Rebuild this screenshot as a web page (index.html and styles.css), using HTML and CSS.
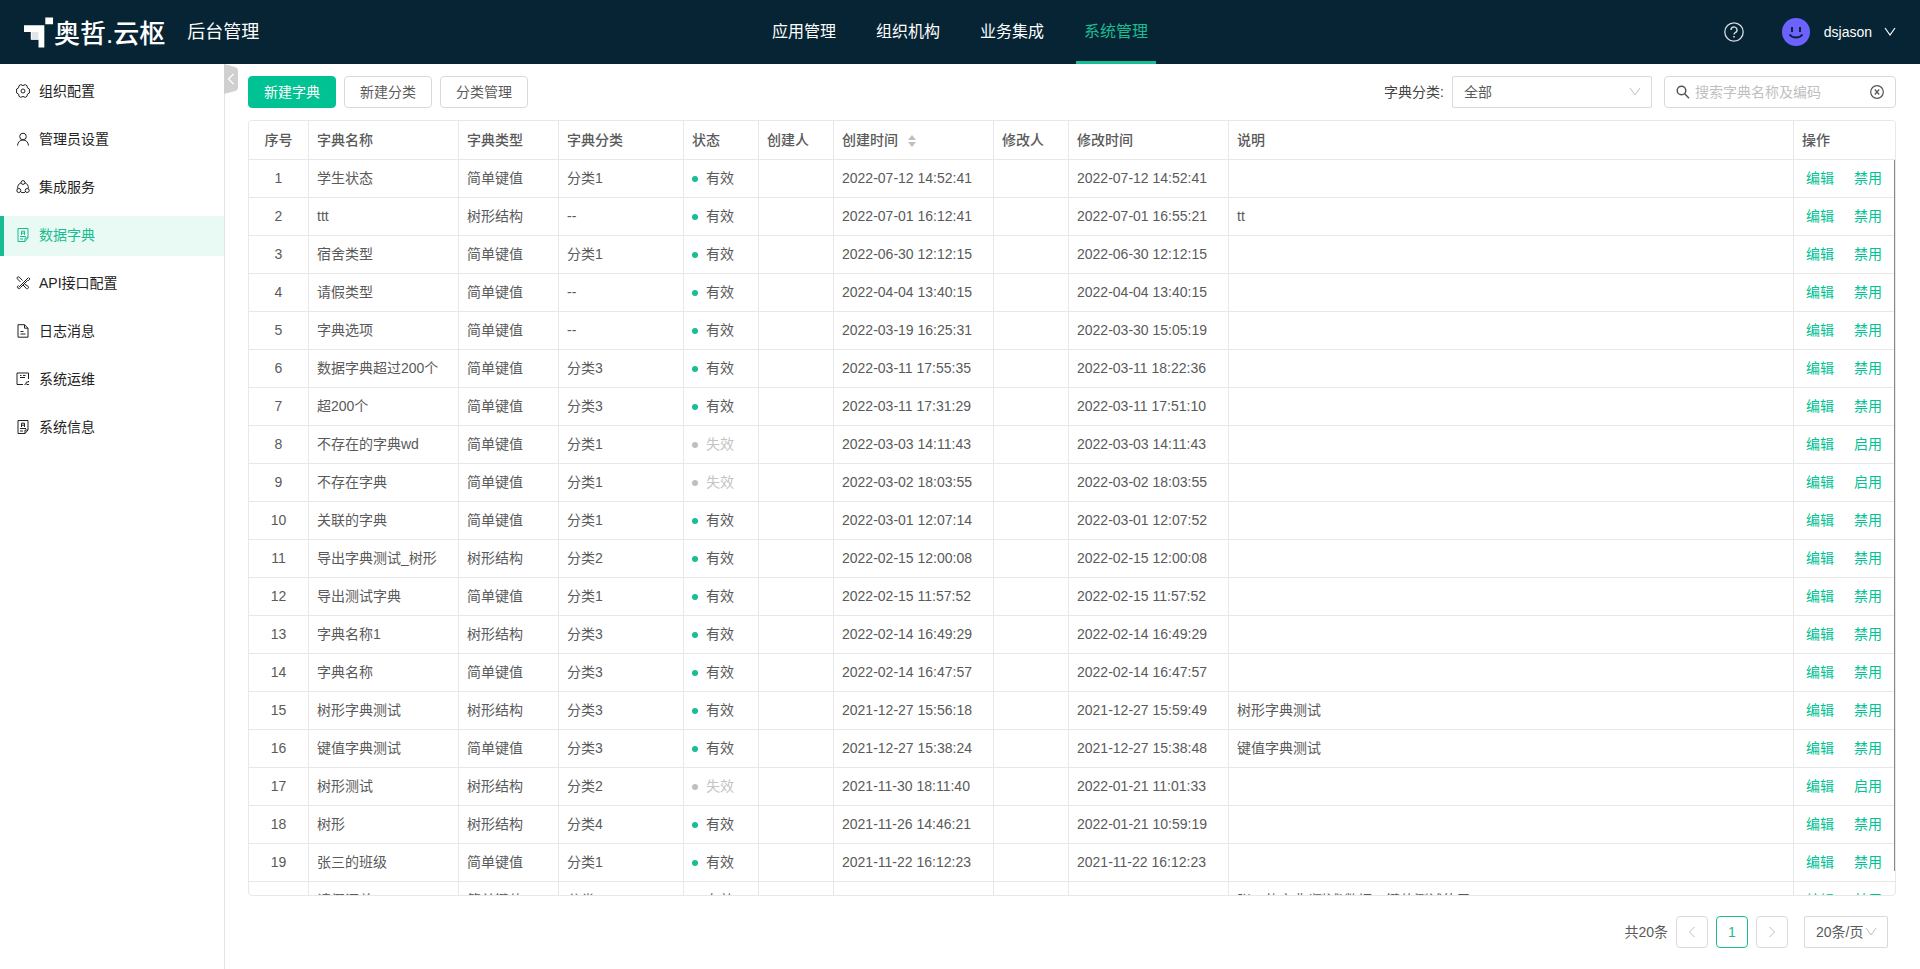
FILE: index.html
```html
<!DOCTYPE html>
<html lang="zh-CN">
<head>
	<title>后台管理</title>
	<meta charset="utf-8">
<link rel="stylesheet" href="styles.css">
</head>
<body>
<header class="header">
	<div class="brand">
		<a href="#" class="logo">
			<svg class="logo-mark" viewBox="0 0 31 31"><path fill="#fff" d="M22 0h8v7h-8zM0 8h21v23h-6v-8H7v-8H0z"/><path fill="#dfe5e8" d="M8 15h7v8H8z"/></svg>
			<span class="logo-text">奥哲.云枢</span>
		</a>
		<span class="title">后台管理</span>
	</div>
	<nav class="nav">
		<a href="#">应用管理</a>
		<a href="#">组织机构</a>
		<a href="#">业务集成</a>
		<a href="#" class="active">系统管理</a>
	</nav>
	<div class="user">
		<svg class="help" viewBox="0 0 20 20" fill="none" stroke="#d5dade"><circle cx="10" cy="10" r="9.2" stroke-width="1.3"/><path d="M7 8a3 3 0 1 1 4.3 2.6c-.9.4-1.3.9-1.3 1.9" stroke-width="1.4"/><path d="M10 14v1.6" stroke-width="1.6"/></svg>
		<svg class="avatar" viewBox="0 0 28 28"><circle cx="14" cy="14" r="14" fill="#6c63ff"/><path fill="#062434" d="M9 9h2v5H9zM17 9h2v5h-2z"/><path d="M7.500 16.500c3 4 10 4 13 0" fill="none" stroke="#062434" stroke-width="2"/></svg>
		<span class="username">dsjason</span>
		<svg class="arrow" viewBox="0 0 12 12" fill="none" stroke="#fff" stroke-width="1.2"><path d="M1 2l5 7 5-7"/></svg>
	</div>
</header>

<div class="container">
	<aside class="sidebar">
		<a href="#"><svg viewBox="0 0 14 14"><path d="M4.800.6Q7 2.600 9.200.6L11 1.700Q10.600 4.300 13.400 5v4Q10.600 9.700 11 12.300L9.200 13.400Q7 11.400 4.800 13.400L3 12.300Q3.400 9.700.6 9V5Q3.400 4.300 3 1.700z"/><circle cx="7" cy="7" r="2"/></svg>组织配置</a>
		<a href="#"><svg viewBox="0 0 14 14"><circle cx="7" cy="4.500" r="3.300"/><path d="M1.500 13.500C1.800 10 4 8 7 8s5.200 2 5.500 5.500"/></svg>管理员设置</a>
		<a href="#"><svg viewBox="0 0 14 14"><circle cx="7" cy="2.500" r="1.900"/><circle cx="2.800" cy="10.500" r="2"/><circle cx="11.200" cy="10.500" r="2"/><path d="M5 2.800C2.500 3.800 1.500 6 1.600 8.500M9 2.800c2.500 1 3.500 3.200 3.400 5.700M5 12.200c1.300.6 2.700.6 4 0"/></svg>集成服务</a>
		<a href="#" class="active"><svg viewBox="0 0 14 14"><path d="M2 .5h10v9.500l-3 3.500H2zM9 13.500V10h3M5.500 7V3.200h3V7M5.500 5.200h3M4 8.500h6M4 11h3"/></svg>数据字典</a>
		<a href="#"><svg viewBox="0 0 14 14"><path d="M12.500 1.500l-10 10M2.500 9.500a1.600 1.600 0 1 0 2 2l7-7c1.500.4 2.400-1 2-2.500M4.500 6L1.300 2.800a1.300 1.300 0 0 1 1.800-1.800L6.500 4.500M8.500 8l3.800 2.500a1.500 1.500 0 0 1-1.800 2.200L7 9"/></svg>API接口配置</a>
		<a href="#"><svg viewBox="0 0 14 14"><path d="M2 .7h6.500L12 4.200v9H2zM8.500.7v3.500H12M4.500 7.500h3M4.500 10h5"/></svg>日志消息</a>
		<a href="#"><svg viewBox="0 0 14 14"><path d="M7 12.500H1V1h11.500v6M4 3.500h1.500M7 3.500h2.500M4 5.500h5M8.500 12.500q2 0 2-2.500M10.500 10h2M12.500 9v1M10.500 12.500h2.500"/></svg>系统运维</a>
		<a href="#"><svg viewBox="0 0 14 14"><path d="M2 .5h10v9.500l-3 3.500H2zM9 13.500V10h3M5.500 7V3.200h3V7M5.500 5.200h3M4 8.500h6M4 11h3"/></svg>系统信息</a>
	</aside>

	<main class="main">
		<button class="collapse" aria-label="收起">
			<svg viewBox="0 0 14 30"><path fill="#d0d0d0" d="M0 0l11 3q3 1 3 4v16q0 3-3 4L0 30z"/><path d="M9.500 10l-5 5 5 5" fill="none" stroke="#fff" stroke-width="1.200"/></svg>
		</button>
		<div class="toolbar">
			<button class="btn primary">新建字典</button>
			<button class="btn">新建分类</button>
			<button class="btn">分类管理</button>
			<div class="filter">
				<label for="type">字典分类:</label>
				<div class="select">
					<select id="type"><option>全部</option></select>
					<svg class="arrow" viewBox="0 0 12 12"><path d="M1 2l5 7 5-7"/></svg>
				</div>
				<div class="search">
					<svg viewBox="0 0 14 14" fill="none" stroke="#555" stroke-width="1.500"><circle cx="5.500" cy="5.500" r="4.300"/><path d="M8.700 8.700l4.300 4.500"/></svg>
					<input type="text" placeholder="搜索字典名称及编码" aria-label="搜索字典名称及编码">
					<button class="clear" aria-label="清空"><svg viewBox="0 0 14 14" fill="none" stroke="#555" stroke-width="1.200"><circle cx="7" cy="7" r="6.300"/><path d="M4.800 4.500l4.400 5M9.200 4.500l-4.400 5"/></svg></button>
				</div>
			</div>
		</div>

		<div class="table-box">
			<div class="table-scroll">
				<table>
					<colgroup>
						<col class="w60"><col class="w150"><col class="w100"><col class="w125"><col class="w75"><col class="w75"><col class="w160"><col class="w75"><col class="w160"><col><col class="w101">
					</colgroup>
					<thead>
						<tr>
							<th>序号</th><th>字典名称</th><th>字典类型</th><th>字典分类</th><th>状态</th><th>创建人</th>
							<th>创建时间<svg class="sort" viewBox="0 0 8 12"><path d="M4 0l4 5H0zM4 12l4-5H0z"/></svg></th>
							<th>修改人</th><th>修改时间</th><th>说明</th><th>操作</th>
						</tr>
					</thead>
					<tbody id="rows"></tbody>
				</table>
			</div>
			<div class="thumb"></div>
		</div>

		<div class="pager">
			<span class="total">共20条</span>
			<button class="page" aria-label="上一页"><svg viewBox="0 0 12 12"><path d="M8.500 1l-5 5 5 5"/></svg></button>
			<button class="page current">1</button>
			<button class="page" aria-label="下一页"><svg viewBox="0 0 12 12"><path d="M3.500 1l5 5-5 5"/></svg></button>
			<div class="select size">
				<select aria-label="每页条数"><option>20条/页</option></select>
				<svg class="arrow" viewBox="0 0 12 12"><path d="M1 2l5 7 5-7"/></svg>
			</div>
		</div>
	</main>
</div>
<script src="script.js"></script>
</body>
</html>
```
FILE: styles.css
```css
*{
	box-sizing: border-box;
}
body{
	margin: 0;
	height: 100vh;
	display: flex;
	flex-direction: column;
	font-family: "Liberation Sans", "Noto Sans CJK SC", sans-serif;
	font-size: 14px;
	line-height: 20px;
	color: #5a5a5a;
	background: #fff;
	overflow: hidden;
}
a{
	text-decoration: none;
}
button, input, select{
	font: inherit;
	color: inherit;
}
button{
	cursor: pointer;
}
svg{
	display: block;
	flex: none;
}

/* header */
.header{
	flex: none;
	display: grid;
	grid-template-columns: 1fr auto 1fr;
	height: 64px;
	padding: 0 24px;
	background: #062434;
	color: #fff;
}
.brand, .logo, .user{
	display: flex;
	align-items: center;
}
.brand{
	gap: 22px;
}
.logo{
	color: #fff;
}
.logo-mark{
	width: 30px;
	height: 31px;
}
.logo-text{
	font-size: 26px;
	line-height: 32px;
	font-weight: 500;
	padding-top: 4px;
}
.title{
	font-size: 18px;
}
.nav{
	display: flex;
	gap: 24px;
}
.nav a{
	padding: 0 8px;
	font-size: 16px;
	line-height: 64px;
	color: #fff;
}
.nav a.active{
	color: #1abc92;
	box-shadow: inset 0 -3px #1abc92;
}
.user{
	justify-content: flex-end;
}
.help{
	width: 20px;
	height: 20px;
	margin-right: 38px;
}
.avatar{
	width: 28px;
	height: 28px;
	margin-right: 14px;
}
.username{
	margin-right: 12px;
}
.arrow{
	width: 12px;
	height: 12px;
}

/* sidebar */
.container{
	flex: 1;
	display: flex;
	min-height: 0;
}
.sidebar{
	flex: none;
	width: 225px;
	padding-top: 8px;
	border-right: 1px solid #e4e4e4;
}
.sidebar a{
	display: flex;
	align-items: center;
	gap: 9px;
	height: 40px;
	margin-bottom: 8px;
	padding: 0 0 2px 12px;
	border-left: 4px solid transparent;
	color: #222;
}
.sidebar svg{
	width: 14px;
	height: 14px;
	fill: none;
	stroke: currentColor;
}
.sidebar a.active{
	color: #1abc92;
	background: #e8faf3;
	border-color: #1abc92;
}

/* content */
.main{
	position: relative;
	flex: 1;
	min-width: 0;
	display: flex;
	flex-direction: column;
	padding: 12px 24px 21px 23px;
}
.collapse{
	position: absolute;
	left: -1px;
	top: 0;
	width: 14px;
	height: 30px;
	padding: 0;
	border: 0;
	background: none;
}
.toolbar, .filter, .search, .pager{
	display: flex;
	align-items: center;
}
.toolbar{
	flex: none;
	gap: 8px;
	height: 32px;
	margin-bottom: 12px;
}
.btn{
	height: 32px;
	padding: 0 15px;
	border: 1px solid #d9d9d9;
	border-radius: 4px;
	background: #fff;
}
.btn.primary{
	color: #fff;
	background: #00c293;
	border-color: #00c293;
}
.filter{
	margin-left: auto;
}
.filter label{
	margin-right: 8px;
	color: #444;
}
.select{
	position: relative;
	width: 200px;
}
.select select{
	display: block;
	appearance: none;
	width: 100%;
	height: 32px;
	padding: 0 11px;
	border: 1px solid #d9d9d9;
	border-radius: 2px;
	background: #fff;
}
.select .arrow{
	position: absolute;
	right: 11px;
	top: 10px;
	pointer-events: none;
}
.select .arrow, .page svg{
	fill: none;
	stroke: #bfbfbf;
}
.search{
	width: 232px;
	height: 32px;
	margin-left: 12px;
	padding: 0 11px;
	border: 1px solid #d9d9d9;
	border-radius: 4px;
}
.search svg{
	width: 14px;
	height: 14px;
}
.search input{
	flex: 1;
	min-width: 0;
	padding: 0 5px;
	border: 0;
	outline: 0;
}
.search input::placeholder{
	color: #bfbfbf;
}
.clear{
	padding: 0;
	border: 0;
	background: none;
}

/* table */
.table-box{
	position: relative;
	flex: 1;
	min-height: 0;
	border: 1px solid #e8e8e8;
	border-radius: 4px;
	overflow: hidden;
}
.table-scroll{
	height: 100%;
	overflow-y: auto;
	scrollbar-width: none;
}
.thumb{
	position: absolute;
	top: 39px;
	right: 0;
	bottom: 24px;
	width: 1px;
	background: #888;
}
table{
	width: 100%;
	table-layout: fixed;
	border-collapse: separate;
	border-spacing: 0;
}
.w60{ width: 60px; }
.w75{ width: 75px; }
.w100{ width: 100px; }
.w101{ width: 101px; }
.w125{ width: 125px; }
.w150{ width: 150px; }
.w160{ width: 160px; }
th, td{
	height: 38px;
	padding: 0 8px 1px;
	text-align: left;
	white-space: nowrap;
	border-right: 1px solid #e8e8e8;
	border-bottom: 1px solid #e8e8e8;
}
th{
	position: sticky;
	top: 0;
	height: 39px;
	font-weight: 500;
	background: #fff;
}
th:first-child, td:first-child{
	text-align: center;
}
th:last-child, td:last-child{
	border-right: 0;
}
td:last-child{
	padding-left: 12px;
}
td a{
	color: #00c293;
	margin-right: 20px;
}
td a:last-child{
	margin-right: 0;
}
.sort{
	display: inline-block;
	width: 8px;
	height: 12px;
	margin-left: 10px;
	vertical-align: -2px;
	fill: #bfbfbf;
}
.status::before{
	content: "";
	display: inline-block;
	width: 6px;
	height: 6px;
	margin-right: 8px;
	border-radius: 50%;
	background: #1abc92;
	vertical-align: 1px;
}
.status.off{
	color: #c4c4c4;
}
.status.off::before{
	background: #bfbfbf;
}

/* pagination */
.pager{
	flex: none;
	justify-content: flex-end;
	gap: 8px;
	margin-top: 20px;
	padding-right: 8px;
}
.page{
	display: flex;
	align-items: center;
	justify-content: center;
	width: 32px;
	height: 32px;
	padding: 0;
	border: 1px solid #d9d9d9;
	border-radius: 4px;
	background: #fff;
}
.page svg{
	width: 12px;
	height: 12px;
}
.page.current{
	color: #1abc92;
	border-color: #1abc92;
}
.select.size{
	width: 84px;
	margin-left: 8px;
}
```
FILE: script.js
```js
// name, type, category, enabled, created, modified, remark
var rows = [
	["学生状态","简单键值","分类1",1,"2022-07-12 14:52:41","2022-07-12 14:52:41",""],
	["ttt","树形结构","--",1,"2022-07-01 16:12:41","2022-07-01 16:55:21","tt"],
	["宿舍类型","简单键值","分类1",1,"2022-06-30 12:12:15","2022-06-30 12:12:15",""],
	["请假类型","简单键值","--",1,"2022-04-04 13:40:15","2022-04-04 13:40:15",""],
	["字典选项","简单键值","--",1,"2022-03-19 16:25:31","2022-03-30 15:05:19",""],
	["数据字典超过200个","简单键值","分类3",1,"2022-03-11 17:55:35","2022-03-11 18:22:36",""],
	["超200个","简单键值","分类3",1,"2022-03-11 17:31:29","2022-03-11 17:51:10",""],
	["不存在的字典wd","简单键值","分类1",0,"2022-03-03 14:11:43","2022-03-03 14:11:43",""],
	["不存在字典","简单键值","分类1",0,"2022-03-02 18:03:55","2022-03-02 18:03:55",""],
	["关联的字典","简单键值","分类1",1,"2022-03-01 12:07:14","2022-03-01 12:07:52",""],
	["导出字典测试_树形","树形结构","分类2",1,"2022-02-15 12:00:08","2022-02-15 12:00:08",""],
	["导出测试字典","简单键值","分类1",1,"2022-02-15 11:57:52","2022-02-15 11:57:52",""],
	["字典名称1","树形结构","分类3",1,"2022-02-14 16:49:29","2022-02-14 16:49:29",""],
	["字典名称","简单键值","分类3",1,"2022-02-14 16:47:57","2022-02-14 16:47:57",""],
	["树形字典测试","树形结构","分类3",1,"2021-12-27 15:56:18","2021-12-27 15:59:49","树形字典测试"],
	["键值字典测试","简单键值","分类3",1,"2021-12-27 15:38:24","2021-12-27 15:38:48","键值字典测试"],
	["树形测试","树形结构","分类2",0,"2021-11-30 18:11:40","2022-01-21 11:01:33",""],
	["树形","树形结构","分类4",1,"2021-11-26 14:46:21","2022-01-21 10:59:19",""],
	["张三的班级","简单键值","分类1",1,"2021-11-22 16:12:23","2021-11-22 16:12:23",""],
	["请假汇总","简单键值","分类1",1,"2021-11-22 15:20:36","2021-11-22 15:20:36","张三的字典(测试)数据，键值测试使用"]
];
var html = "";
for(var i=0;i<rows.length;i++){
	var r = rows[i];
	html += "<tr><td>" + (i+1) + "</td><td>" + r[0] + "</td><td>" + r[1] + "</td><td>" + r[2] + "</td>";
	html += "<td><span class='status" + (r[3] ? "" : " off") + "'>" + (r[3] ? "有效" : "失效") + "</span></td>";
	html += "<td></td><td>" + r[4] + "</td><td></td><td>" + r[5] + "</td><td>" + r[6] + "</td>";
	html += "<td><a href='#'>编辑</a><a href='#'>" + (r[3] ? "禁用" : "启用") + "</a></td></tr>";
}
document.getElementById("rows").innerHTML = html;
```
